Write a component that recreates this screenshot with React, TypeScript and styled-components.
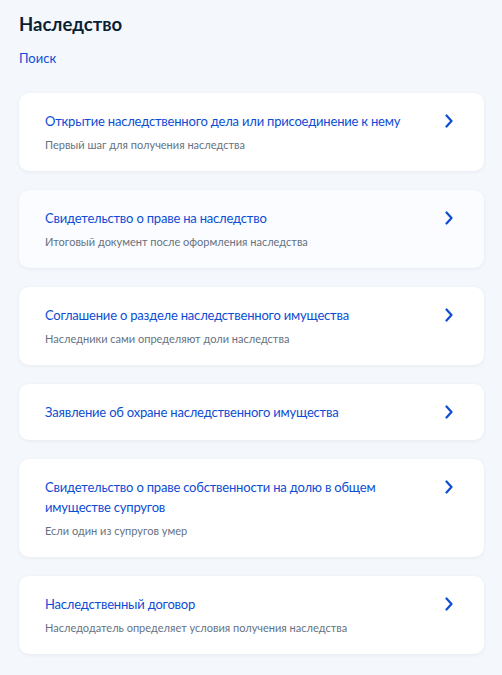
import React from "react";
import styled, { createGlobalStyle } from "styled-components";

const GlobalStyle = createGlobalStyle`
  html, body {
    margin: 0;
    padding: 0;
    background: #f4f7fc;
  }
  body {
    font-family: Lato, "Noto Sans", Arial, sans-serif;
    -webkit-font-smoothing: antialiased;
  }
`;

const Page = styled.main`
  box-sizing: border-box;
  width: 502px;
  min-height: 675px;
  padding: 10px 18px 20px 19px;
  background: #f4f7fc;
`;

const Heading = styled.h1`
  margin: 0;
  font-size: 18.5px;
  line-height: 28px;
  font-weight: 700;
  color: #0b1f33;
`;

const SearchLink = styled.a`
  display: inline-block;
  margin-top: 10px;
  font-size: 13px;
  line-height: 20px;
  color: #0d4cd3;
  text-decoration: none;
  cursor: pointer;
`;

const List = styled.ul`
  list-style: none;
  margin: 25px 0 0;
  padding: 0;
  display: flex;
  flex-direction: column;
  gap: 19px;
`;

const Card = styled.li<{ $tinted?: boolean }>`
  display: flex;
  align-items: flex-start;
  gap: 20px;
  padding: 18px 31px 18px 26px;
  border-radius: 10px;
  background: ${(p) => (p.$tinted ? "#fafcff" : "#ffffff")};
  box-shadow: 0 1px 4px rgba(11, 31, 51, 0.06);
  cursor: pointer;
`;

const Body = styled.div`
  flex: 1;
  min-width: 0;
  display: flex;
  flex-direction: column;
  gap: 6px;
`;

const Title = styled.span`
  font-size: 13px;
  line-height: 20px;
  letter-spacing: -0.2px;
  color: #0d4cd3;
`;

const Note = styled.span`
  font-size: 11px;
  line-height: 16px;
  color: #66727f;
`;

const Arrow = styled.svg`
  flex: none;
  width: 8px;
  height: 14px;
  margin-top: 3px;
`;

const Chevron = () => (
  <Arrow viewBox="0 0 8 14" fill="none">
    <path
      d="M1.5 1.5 L6.5 7 L1.5 12.5"
      stroke="#0d4cd3"
      strokeWidth="2.2"
      strokeLinecap="round"
      strokeLinejoin="round"
    />
  </Arrow>
);

type Item = { title: string; note?: string; tinted?: boolean };

const items: Item[] = [
  {
    title: "Открытие наследственного дела или присоединение к нему",
    note: "Первый шаг для получения наследства",
  },
  {
    title: "Свидетельство о праве на наследство",
    note: "Итоговый документ после оформления наследства",
    tinted: true,
  },
  {
    title: "Соглашение о разделе наследственного имущества",
    note: "Наследники сами определяют доли наследства",
  },
  { title: "Заявление об охране наследственного имущества" },
  {
    title: "Свидетельство о праве собственности на долю в общем имуществе супругов",
    note: "Если один из супругов умер",
  },
  {
    title: "Наследственный договор",
    note: "Наследодатель определяет условия получения наследства",
  },
];

export default function App() {
  return (
    <>
      <GlobalStyle />
      <Page>
        <Heading>Наследство</Heading>
        <SearchLink>Поиск</SearchLink>
        <List>
          {items.map((it) => (
            <Card key={it.title} $tinted={it.tinted}>
              <Body>
                <Title>{it.title}</Title>
                {it.note && <Note>{it.note}</Note>}
              </Body>
              <Chevron />
            </Card>
          ))}
        </List>
      </Page>
    </>
  );
}
